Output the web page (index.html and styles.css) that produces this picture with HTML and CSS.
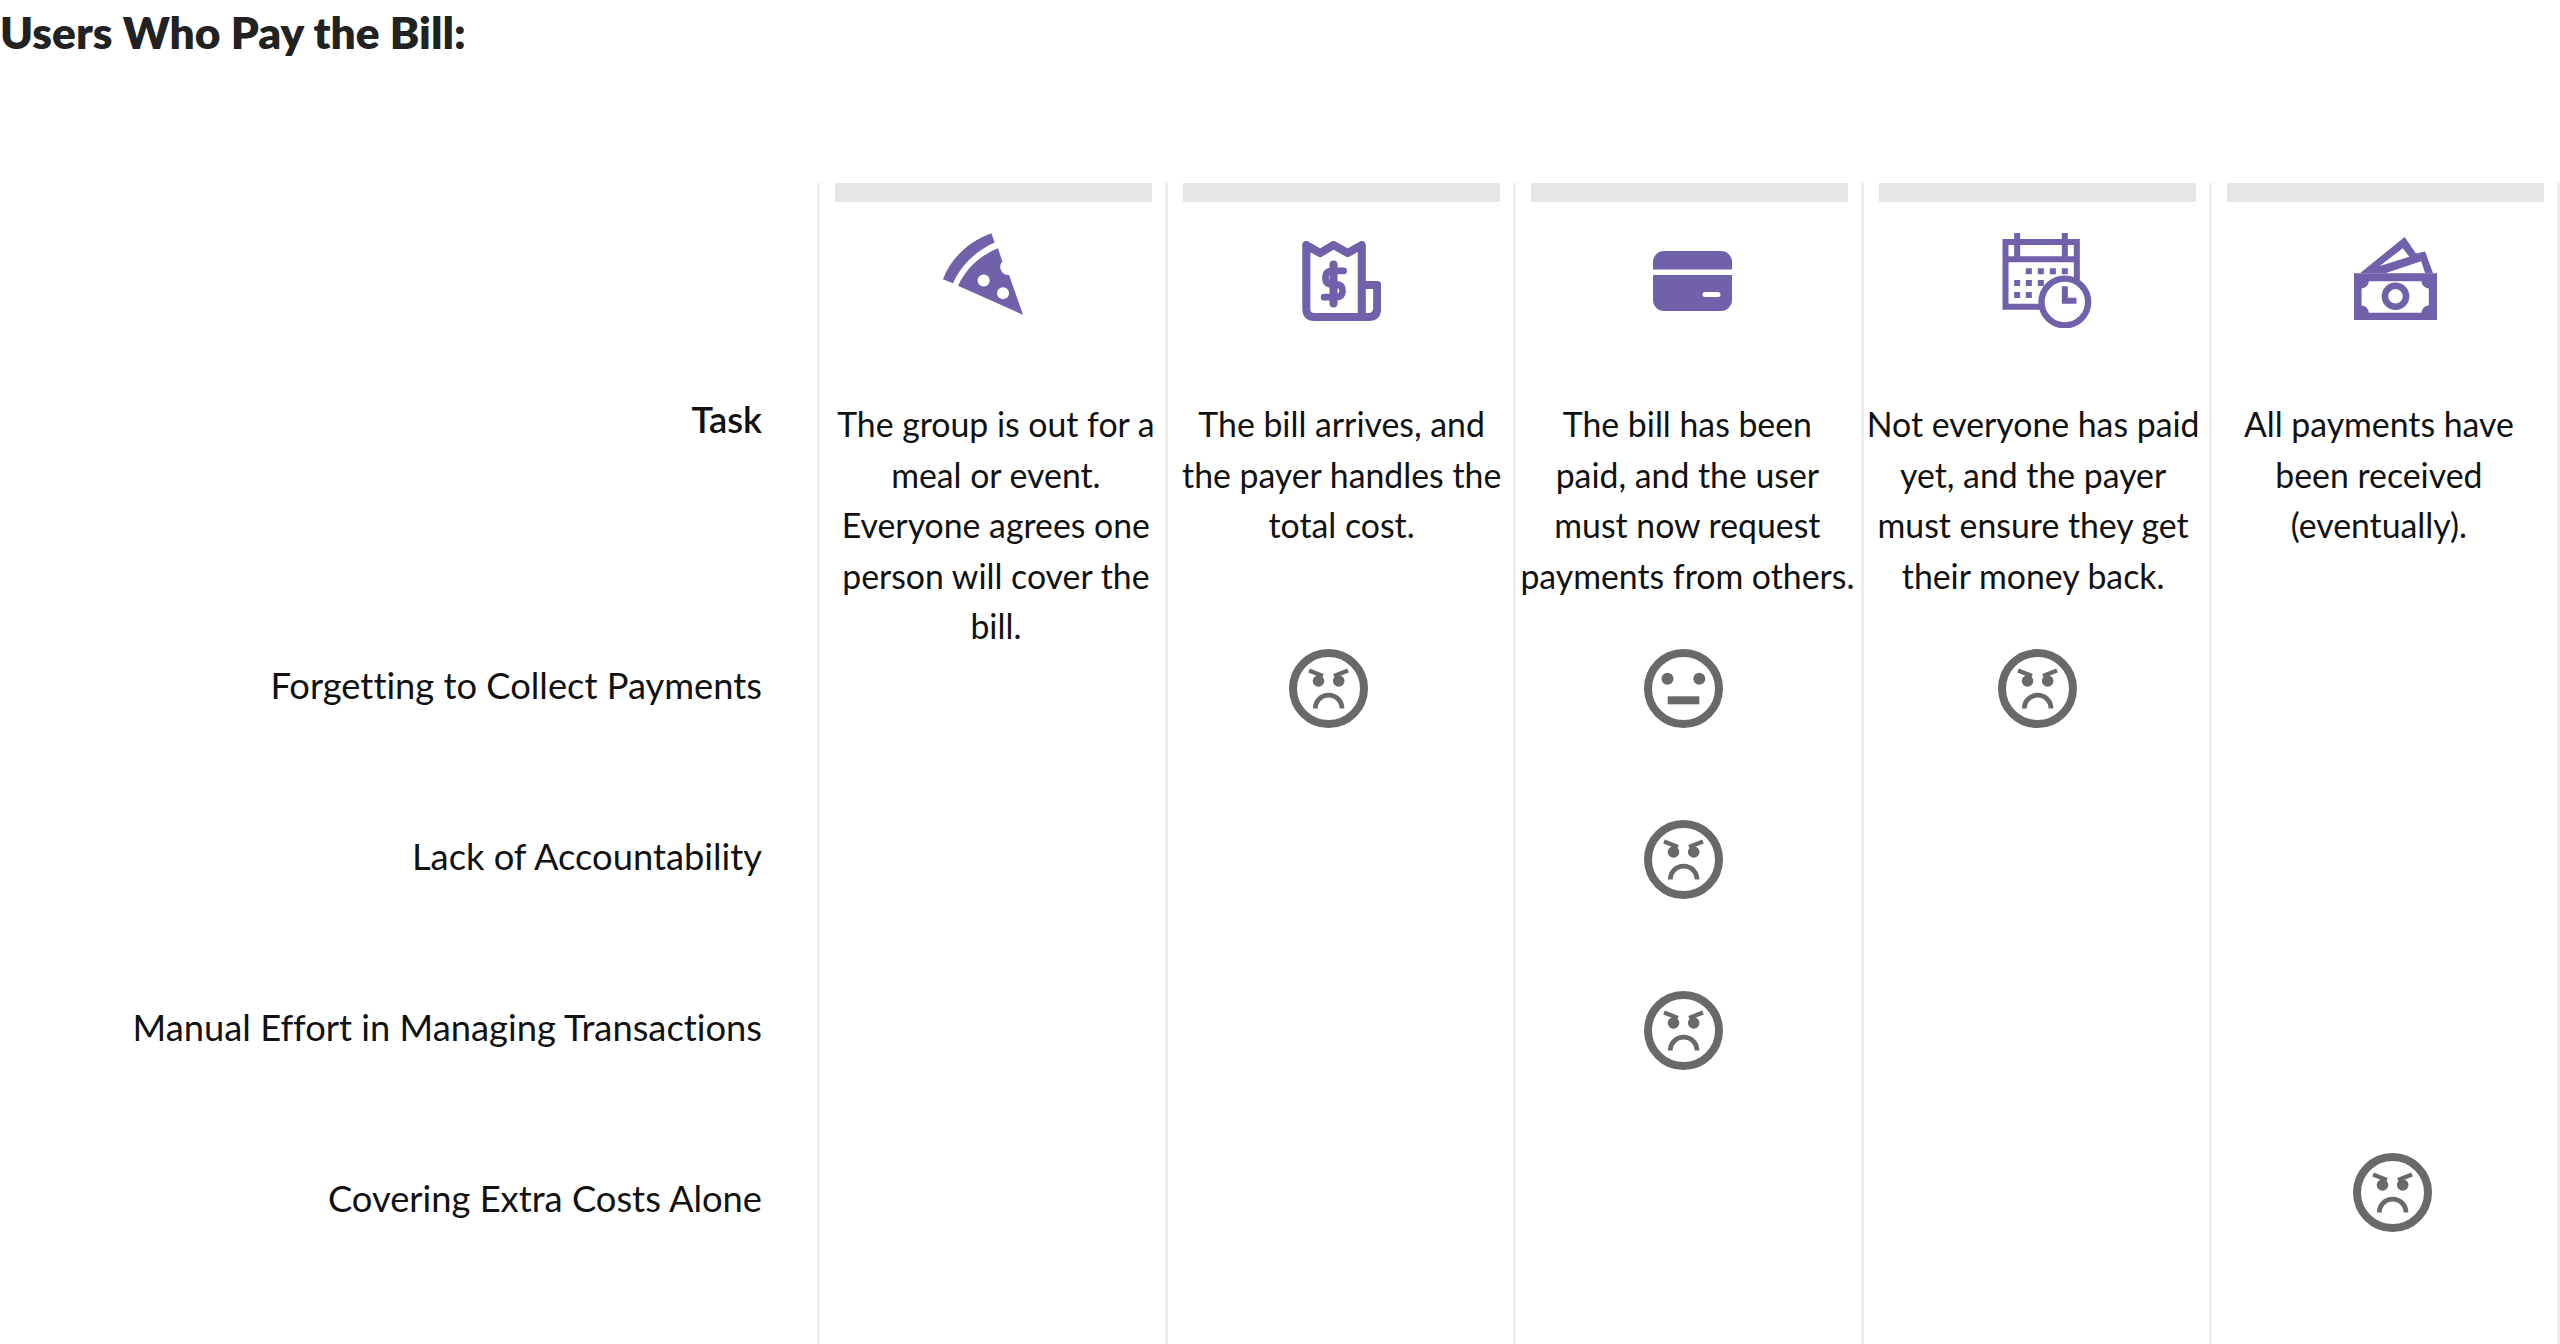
FILE: index.html
```html
<!DOCTYPE html>
<html lang="en">
<head>
<meta charset="utf-8">
<title>Users Who Pay the Bill</title>
<link rel="stylesheet" href="styles.css">
</head>
<body>
<h1 class="title">Users Who Pay the Bill:</h1>
<main class="board">
  <div class="bars">
    <div class="bar"></div><div class="bar"></div><div class="bar"></div><div class="bar"></div><div class="bar"></div>
  </div>
  <div class="icons">
    <svg class="icon icon-pizza" viewBox="70 40 240 245"><path d="M70 178C92 118 145 65 215 40L225 68C170 92 125 135 100 190Z"/><path fill-rule="evenodd" d="M115 198C140 145 180 108 235 85L248 125A24 24 0 0 0 268 165L310 285ZM192 164a18 18 0 1 0 .1 0ZM250 202a18 18 0 1 0 .1 0Z"/></svg>
    <svg class="icon icon-bill" viewBox="67 62 235 238"><g class="stroke-art"><path d="M79 74L120 98L160 74L202 98L244 74V288M79 74V262Q79 288 104 288H264Q290 288 290 262V193H244"/><path d="M160 132V248" /><path class="thin" d="M190 151H156Q136 151 136 171Q136 191 158 191H166Q187 191 187 210Q187 229 166 229H132"/></g></svg>
    <svg class="icon icon-card" viewBox="0 0 79 60"><path d="M11 0H68A11 11 0 0 1 79 11V18.5H0V11A11 11 0 0 1 11 0Z"/><path fill-rule="evenodd" d="M0 24H79V49A11 11 0 0 1 68 60H11A11 11 0 0 1 0 49ZM52 41A2.5 2.5 0 0 0 52 46H65A2.5 2.5 0 0 0 65 41Z"/></svg>
    <svg class="icon icon-calendar" viewBox="68 40 267 285"><path fill-rule="evenodd" d="M68 58H103V40H121V58H246V40H264V58H300V270H68ZM86 76V110H103V92H121V110H246V92H264V110H282V76H264V92H246V76H121V92H103V76ZM86 128V252H282V128Z"/><path d="M138 146h18v18h-18zM174 146h18v18h-18zM210 146h18v18h-18zM246 146h18v18h-18zM103 181h18v18h-18zM138 181h18v18h-18zM174 181h18v18h-18zM103 217h18v18h-18zM138 217h18v18h-18z"/><circle class="clock" cx="255" cy="247" r="70"/><path class="hands" d="M255 200V243H290"/></svg>
    <svg class="icon icon-money" viewBox="70 48 252 252"><path d="M88 158L224 48L258 98L286 92L310 158Z"/><path class="hole" d="M148 136L218 82L238 108ZM165 158L274 122L286 158Z"/><path d="M70 158H322V300H70Z"/><path class="hole" d="M115 182H275A22 22 0 0 0 297 204V256A22 22 0 0 0 275 278H115A22 22 0 0 0 93 256V204A22 22 0 0 0 115 182Z"/><circle class="ring" cx="196" cy="228" r="32"/></svg>
  </div>
  <div class="task-row">
    <div class="label label-strong">Task</div>
    <p class="step">The group is out for a<br>meal or event.<br>Everyone agrees one<br>person will cover the<br>bill.</p>
    <p class="step">The bill arrives, and<br>the payer handles the<br>total cost.</p>
    <p class="step">The bill has been<br>paid, and the user<br>must now request<br>payments from others.</p>
    <p class="step">Not everyone has paid<br>yet, and the payer<br>must ensure they get<br>their money back.</p>
    <p class="step">All payments have<br>been received<br>(eventually).</p>
  </div>
  <div class="pain-row">
    <div class="label">Forgetting to Collect Payments</div>
    <span></span>
    <svg class="face" viewBox="0 0 79 79"><use href="#angry"/></svg>
    <svg class="face" viewBox="0 0 79 79"><use href="#neutral"/></svg>
    <svg class="face" viewBox="0 0 79 79"><use href="#angry"/></svg>
  </div>
  <div class="pain-row">
    <div class="label">Lack of Accountability</div>
    <span></span><span></span>
    <svg class="face" viewBox="0 0 79 79"><use href="#angry"/></svg>
  </div>
  <div class="pain-row">
    <div class="label">Manual Effort in Managing Transactions</div>
    <span></span><span></span>
    <svg class="face" viewBox="0 0 79 79"><use href="#angry"/></svg>
  </div>
  <div class="pain-row pain-row-last">
    <div class="label label-low">Covering Extra Costs Alone</div>
    <span></span><span></span><span></span><span></span>
    <svg class="face" viewBox="0 0 79 79"><use href="#angry"/></svg>
  </div>
</main>
<svg class="defs" aria-hidden="true">
  <defs>
    <g id="angry">
      <circle class="face-ring" cx="39.5" cy="39.5" r="35.5"/>
      <circle class="face-ink" cx="29.5" cy="32" r="5.8"/>
      <circle class="face-ink" cx="49.7" cy="32" r="5.8"/>
      <path class="face-line" d="M20 21.5L34 27M59 21.5L45 27"/>
      <path class="face-line face-mouth" d="M26.3 59.5A13.3 13.3 0 0 1 53 59.5"/>
    </g>
    <g id="neutral">
      <circle class="face-ring" cx="39.5" cy="39.5" r="35.5"/>
      <circle class="face-ink" cx="23.5" cy="29.7" r="6"/>
      <circle class="face-ink" cx="55.3" cy="29.7" r="6"/>
      <rect class="face-ink" x="23.7" y="47.3" width="31.6" height="8"/>
    </g>
  </defs>
</svg>
</body>
</html>
```

FILE: styles.css
```css
html, body {
  margin: 0;
  padding: 0;
  height: 1344px;
  overflow: hidden;
  background: #fff;
}
body {
  font-family: "Lato", "Liberation Sans", sans-serif;
  font-variant-ligatures: none;
  color: #111;
}
.title {
  margin: 0 0 119px;
  font-size: 44.3px;
  line-height: 64px;
  font-weight: 800;
  color: #222;
}
.board {
  height: 1161px;
  overflow: hidden;
  background:
    linear-gradient(#fff, #fff) 0 0 / 817px 100% no-repeat,
    linear-gradient(90deg, #ececec 3px, transparent 3px) 817px 0 / 348px 100% repeat-x;
}
.bars {
  display: grid;
  grid-template-columns: repeat(5, 348px);
  margin-left: 818px;
}
.bar {
  height: 19px;
  margin: 0 14px 0 17px;
  background: #e5e5e5;
}
.icons {
  display: flex;
  align-items: flex-start;
  height: 197px;
  padding-left: 943px;
}
.icon { display: block; flex: none; fill: #7160aa; }
.icon-pizza { width: 80px; height: 82px; margin-top: 31px; }
.icon-bill { width: 79.5px; height: 80px; margin: 39px 0 0 278.5px; }
.icon-card { width: 79px; height: 60px; margin: 49px 0 0 272px; }
.icon-calendar { width: 90px; height: 95px; margin: 31px 0 0 270px; }
.icon-money { width: 83px; height: 85px; margin: 34px 0 0 262px; }
.stroke-art { fill: none; stroke: #7160aa; stroke-width: 24; stroke-linejoin: round; stroke-linecap: round; }
.thin { stroke-width: 20; }
.clock { fill: #fff; stroke: #7160aa; stroke-width: 19; }
.hands { fill: none; stroke: #7160aa; stroke-width: 18; }
.hole { fill: #fff; }
.ring { fill: none; stroke: #7160aa; stroke-width: 20; }
.task-row {
  display: grid;
  grid-template-columns: 823px repeat(5, 345.75px);
  height: 250px;
}
.step {
  margin: 0;
  font-size: 33.8px;
  line-height: 50.6px;
  text-align: center;
  white-space: nowrap;
}
.label {
  padding-right: 61px;
  font-size: 36.3px;
  line-height: 50px;
  text-align: right;
  white-space: nowrap;
}
.label-strong { font-weight: 600; margin-top: -5px; }
.pain-row {
  display: grid;
  grid-template-columns: 797px repeat(5, 354.5px);
  align-items: center;
  height: 79px;
  margin-bottom: 92px;
  justify-items: center;
}
.pain-row .label {
  justify-self: end;
  padding-right: 35px;
  margin-top: -7px;
}
.pain-row-last {
  margin-top: -9px;
}
.pain-row .label-low { margin-top: 11px; }
.face { display: block; width: 79px; height: 79px; }
.defs { display: none; }
.face-ring { fill: none; stroke: #696969; stroke-width: 8; }
.face-ink { fill: #696969; }
.face-line { fill: none; stroke: #696969; stroke-width: 4.2; }
.face-mouth { stroke-width: 4.8; }
```
